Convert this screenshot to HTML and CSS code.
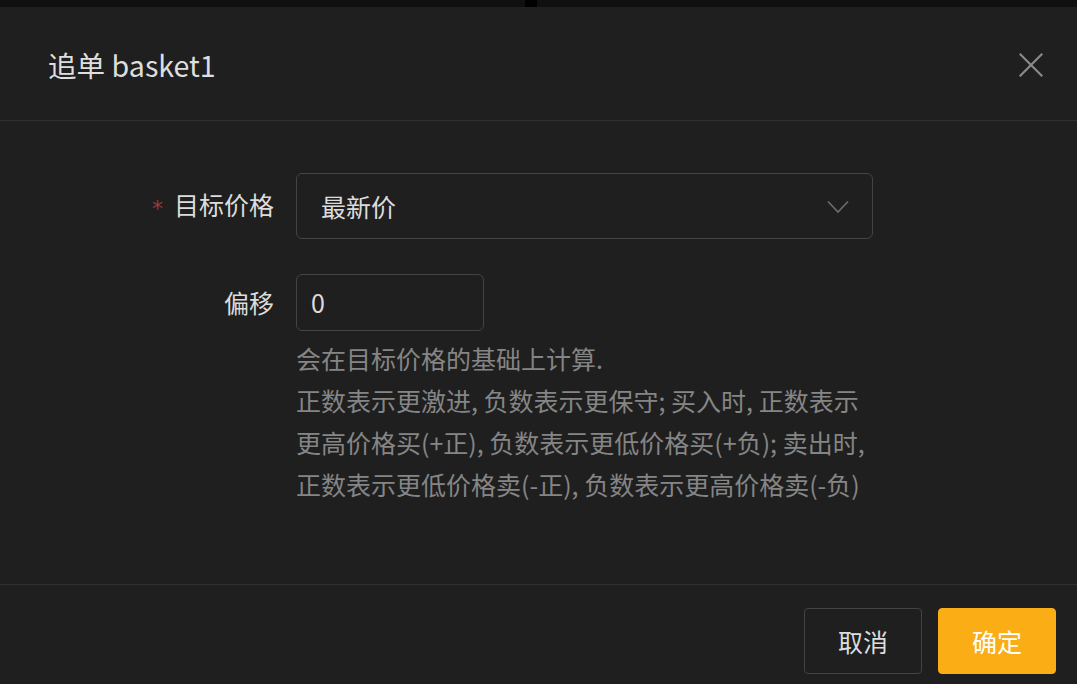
FILE: index.html
```html
<!DOCTYPE html>
<html lang="zh-CN">
<head>
<meta charset="utf-8">
<title>追单 basket1</title>
<link rel="stylesheet" href="styles.css">
</head>
<body>
<div class="backdrop-strip"><span class="strip-mark"></span></div>
<div class="modal">
  <header class="modal-header">
    <h1 class="modal-title">追单 basket1</h1>
    <button class="modal-close" type="button" aria-label="关闭">
      <svg width="24" height="24" viewBox="0 0 24 24"><path d="M1.5 1.5 L22.5 22.5 M22.5 1.5 L1.5 22.5" stroke="#8a8a8a" stroke-width="2.2" fill="none" stroke-linecap="square"/></svg>
    </button>
  </header>
  <main class="modal-body">
    <form class="form">
      <label class="form-label"><span class="required">*</span>目标价格</label>
      <div class="form-control">
        <div class="select">
          <span class="select-value">最新价</span>
          <svg class="select-arrow" width="22" height="14" viewBox="0 0 22 14"><polyline points="1,1.5 11,12 21,1.5" fill="none" stroke="#6a6a6a" stroke-width="1.8"/></svg>
        </div>
      </div>
      <label class="form-label label-offset">偏移</label>
      <div class="form-control control-offset">
        <div class="input">0</div>
        <div class="help">
          <span class="help-line">会在目标价格的基础上计算.</span>
          <span class="help-line">正数表示更激进, 负数表示更保守; 买入时, 正数表示</span>
          <span class="help-line">更高价格买(+正), 负数表示更低价格买(+负); 卖出时,</span>
          <span class="help-line">正数表示更低价格卖(-正), 负数表示更高价格卖(-负)</span>
        </div>
      </div>
    </form>
  </main>
  <footer class="modal-footer">
    <button class="btn btn-default" type="button">取消</button>
    <button class="btn btn-primary" type="button">确定</button>
  </footer>
</div>
</body>
</html>
```
FILE: styles.css
```css
html, body {
  margin: 0;
  padding: 0;
  background: #1f1f1f;
  height: 100%;
  overflow: hidden;
}
body {
  font-family: "Noto Sans CJK SC", "Noto Sans", sans-serif;
  color: rgba(255, 255, 255, 0.85);
}
.backdrop-strip {
  height: 7px;
  background: #101010;
  position: relative;
}
.strip-mark {
  position: absolute;
  left: 525px;
  top: 0;
  width: 12px;
  height: 7px;
  background: #000;
}
.modal {
  display: flex;
  flex-direction: column;
}
.modal-header {
  height: 114px;
  box-sizing: border-box;
  padding: 2px 34px 0 48px;
  display: flex;
  align-items: center;
  justify-content: space-between;
  border-bottom: 1px solid #303030;
}
.modal-title {
  margin: 0;
  font-size: 28.6px;
  font-weight: 400;
  color: #dedede;
  line-height: 40px;
}
.modal-close {
  background: none;
  border: 0;
  padding: 0;
  width: 24px;
  height: 24px;
  display: flex;
  cursor: pointer;
}
.modal-body {
  height: 464px;
  box-sizing: border-box;
  padding-top: 52px;
  border-bottom: 1px solid #303030;
}
.form {
  display: grid;
  grid-template-columns: 274px 577px;
  column-gap: 22px;
  row-gap: 35px;
  align-items: start;
}
.form-label {
  text-align: right;
  font-size: 25px;
  line-height: 62px;
  height: 66px;
  color: #dcdcdc;
  white-space: nowrap;
}
.label-offset {
  line-height: 56px;
  height: 58px;
}
.required {
  color: #9c3b3b;
  font-size: 22px;
  margin-right: 11px;
  font-family: "DejaVu Sans", sans-serif;
  vertical-align: -1px;
}
.select {
  height: 66px;
  box-sizing: border-box;
  border: 1px solid #444;
  border-radius: 6px;
  display: flex;
  align-items: center;
  justify-content: space-between;
  padding: 0 23px 0 24px;
}
.select-value {
  font-size: 25px;
  color: #dcdcdc;
}
.select-arrow {
  margin-top: 1px;
}
.input {
  width: 188px;
  height: 57px;
  box-sizing: border-box;
  border: 1px solid #444;
  border-radius: 6px;
  padding-left: 14px;
  font-size: 25px;
  line-height: 55px;
  color: #dcdcdc;
}
.help {
  margin-top: 6px;
  font-size: 25px;
  line-height: 42px;
  color: #858585;
}
.help-line {
  display: block;
  white-space: nowrap;
}
.modal-footer {
  display: flex;
  justify-content: flex-end;
  gap: 16px;
  padding: 23px 21px 0 0;
}
.btn {
  width: 118px;
  height: 66px;
  box-sizing: border-box;
  border-radius: 4px;
  font-family: "Noto Sans CJK SC", "Noto Sans", sans-serif;
  font-size: 25px;
  cursor: pointer;
}
.btn-default {
  background: transparent;
  border: 1px solid #434343;
  color: #dcdcdc;
}
.btn-primary {
  background: #fbad15;
  border: 1px solid #fbad15;
  color: #fff;
}
```
